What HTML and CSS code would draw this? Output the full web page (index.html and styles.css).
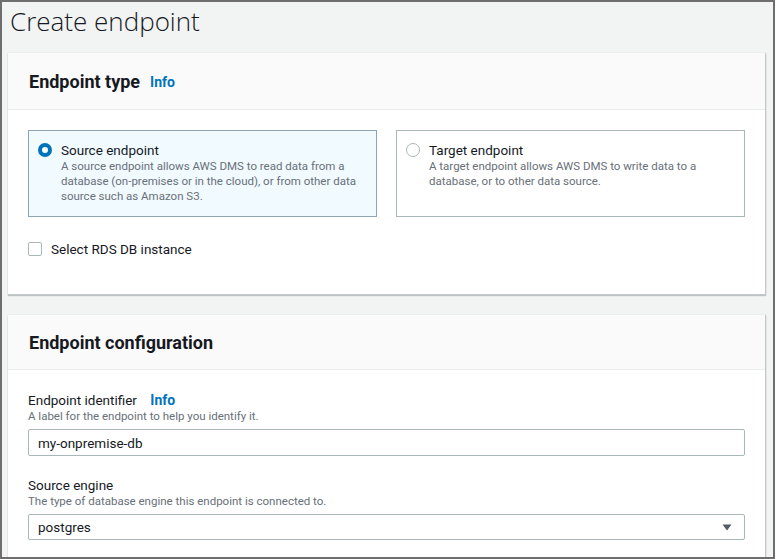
FILE: index.html
```html
<!DOCTYPE html>
<html lang="en">
<head>
<meta charset="utf-8">
<title>Create endpoint</title>
<link rel="stylesheet" href="styles.css">
</head>
<body>
<div class="frame">
  <h1 class="page-title">Create endpoint</h1>

  <section class="card">
    <header class="card-header card-header-type">
      <h2 class="card-title">Endpoint type</h2>
      <a class="info-link">Info</a>
    </header>
    <div class="card-body card-body-type">
      <div class="tiles">
        <div class="tile tile-selected">
          <span class="radio radio-checked"></span>
          <div class="tile-text">
            <div class="tile-title">Source endpoint</div>
            <div class="tile-desc">A source endpoint allows AWS DMS to read data from a database (on-premises or in the cloud), or from other data source such as Amazon S3.</div>
          </div>
        </div>
        <div class="tile">
          <span class="radio"></span>
          <div class="tile-text">
            <div class="tile-title">Target endpoint</div>
            <div class="tile-desc">A target endpoint allows AWS DMS to write data to a database, or to other data source.</div>
          </div>
        </div>
      </div>
      <div class="checkbox-row">
        <span class="checkbox"></span>
        <span class="checkbox-label">Select RDS DB instance</span>
      </div>
    </div>
  </section>

  <section class="card card-config">
    <header class="card-header card-header-config">
      <h2 class="card-title">Endpoint configuration</h2>
    </header>
    <div class="card-body card-body-config">
      <div class="field">
        <div class="field-label">Endpoint identifier <a class="info-link">Info</a></div>
        <div class="field-desc">A label for the endpoint to help you identify it.</div>
        <div class="input">my-onpremise-db</div>
      </div>
      <div class="field field-engine">
        <div class="field-label">Source engine</div>
        <div class="field-desc">The type of database engine this endpoint is connected to.</div>
        <div class="input select">
          <span>postgres</span>
          <svg class="caret" width="10" height="7" viewBox="0 0 10 7"><path d="M0.5 0.5 H9.5 L5 6.5 Z" fill="#545b64"/></svg>
        </div>
      </div>
    </div>
  </section>
</div>
</body>
</html>
```

FILE: styles.css
```css
* { box-sizing: border-box; }
html, body { margin: 0; padding: 0; background: #ffffff; }
body {
  font-family: Roboto, "Open Sans", "Liberation Sans", sans-serif;
  color: #16191f;
}
.frame {
  width: 775px;
  height: 559px;
  border: 2px solid #6e6e6e;
  background: #f2f3f3;
  padding: 0 7px 0 6px;
  overflow: hidden;
}
.page-title {
  margin: 0;
  padding: 2px 0 0 2px;
  height: 51px;
  font-family: "Open Sans", Roboto, sans-serif;
  font-size: 26px;
  font-weight: 300;
  line-height: 34px;
  color: #16191f;
}
.card {
  background: #ffffff;
  border-right: 1px solid #c4c8c8;
  border-bottom: 1px solid #c4c8c8;
  box-shadow: 0 1px 1px 0 rgba(0, 28, 36, 0.2), 0 0 1px 0 rgba(0, 28, 36, 0.15);
}
.card-config { margin-top: 20px; }
.card-header {
  display: flex;
  align-items: center;
  gap: 10px;
  padding: 0 20px 0 21px;
  background: #fafafa;
  border-bottom: 1px solid #eaeded;
}
.card-header-type { height: 57px; padding-top: 1px; }
.card-header-config { height: 55px; padding-top: 1px; }
.card-title {
  margin: 0;
  font-size: 18px;
  font-weight: 700;
  line-height: 22px;
}
.info-link {
  color: #0073bb;
  font-size: 14px;
  font-weight: 700;
  text-decoration: none;
}
.card-body-type { padding: 20px 20px 35px 20px; }
.tiles {
  display: grid;
  grid-template-columns: 1fr 1fr;
  gap: 19px;
}
.tile {
  display: flex;
  gap: 9px;
  border: 1px solid #aab7b8;
  padding: 10px 12px 12px 9px;
  background: #ffffff;
}
.tile-selected {
  background: #f1faff;
  border-color: #8da5b3;
}
.radio {
  flex: none;
  width: 14px;
  height: 14px;
  margin-top: 2px;
  border-radius: 50%;
  border: 1px solid #aab7b8;
  background: #fff;
}
.radio-checked {
  border: 4px solid #0073bb;
  background: #ffffff;
}
.tile-title {
  font-size: 13.5px;
  line-height: 18px;
  color: #16191f;
}
.tile-desc {
  font-size: 11.5px;
  line-height: 15px;
  color: #687078;
}
.checkbox-row {
  display: flex;
  align-items: center;
  gap: 9px;
  margin-top: 22px;
  height: 20px;
}
.checkbox {
  width: 14px;
  height: 14px;
  border: 1px solid #aab7b8;
  border-radius: 2px;
  background: #fff;
}
.checkbox-label { font-size: 13.5px; }
.card-body-config { padding: 21px 20px 20px 20px; }
.field-label {
  font-size: 13.5px;
  line-height: 18px;
}
.field-label .info-link { margin-left: 10px; font-size: 14px; }
.field-desc {
  font-size: 11.5px;
  line-height: 15px;
  color: #687078;
}
.input {
  margin-top: 5px;
  height: 27px;
  border: 1px solid #aab7b8;
  border-radius: 2px;
  padding: 0 9px;
  display: flex;
  align-items: center;
  font-size: 13.5px;
  background: #fff;
}
.field-engine { margin-top: 20px; }
.select {
  height: 26px;
  justify-content: space-between;
  padding-right: 12px;
}
.caret { display: block; }
```
